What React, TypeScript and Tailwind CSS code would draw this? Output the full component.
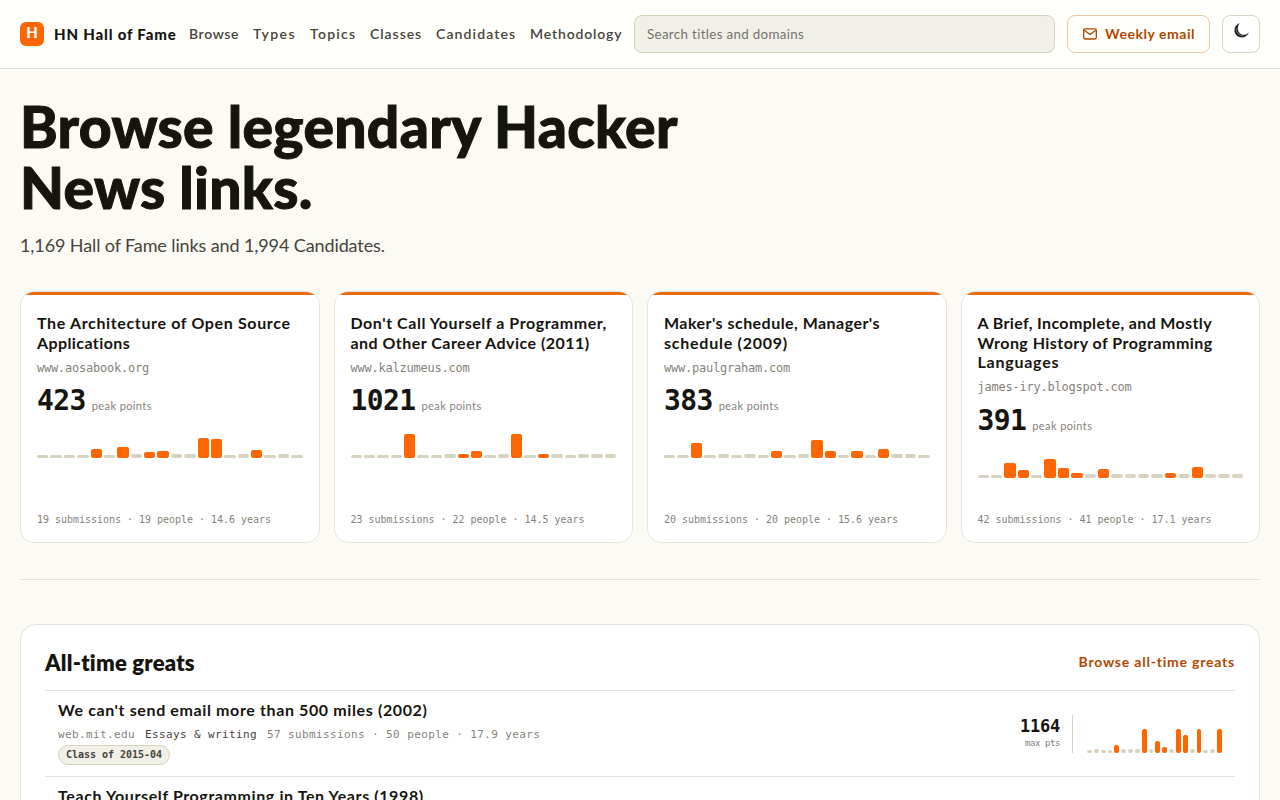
import { clsx } from "clsx";

type Bar = [height: number, hot?: boolean];

const bars = (heights: number[], hot: number[]): Bar[] =>
  heights.map((h, i) => [h, hot.includes(i)]);

type Line = { text: string; track: string };

const navItems = [
  { label: "Browse", cls: "w-[50px] tracking-[0.62px]" },
  { label: "Types", cls: "w-[43px] tracking-[1.4px]" },
  { label: "Topics", cls: "w-[46px] tracking-[1.25px]" },
  { label: "Classes", cls: "w-[52px] tracking-[0.95px]" },
  { label: "Candidates", cls: "w-[80px] tracking-[1.12px]" },
  { label: "Methodology", cls: "w-[92px] tracking-[0.85px]" },
];

const cards: {
  title: Line[];
  domain: string;
  points: string;
  meta: string;
  chart: Bar[];
}[] = [
  {
    title: [
      { text: "The Architecture of Open Source", track: "tracking-[0.64px]" },
      { text: "Applications", track: "tracking-[0.4px]" },
    ],
    domain: "www.aosabook.org",
    points: "423",
    meta: "19 submissions · 19 people · 14.6 years",
    chart: bars(
      [3, 3, 3, 3, 9, 3, 11, 4, 6, 7, 4, 4, 20, 19, 3, 4, 8, 3, 4, 3],
      [4, 6, 8, 9, 12, 13, 16],
    ),
  },
  {
    title: [
      { text: "Don't Call Yourself a Programmer,", track: "tracking-[0.55px]" },
      { text: "and Other Career Advice (2011)", track: "tracking-[0.47px]" },
    ],
    domain: "www.kalzumeus.com",
    points: "1021",
    meta: "23 submissions · 22 people · 14.5 years",
    chart: bars(
      [3, 3, 3, 3, 24, 3, 3, 4, 4, 7, 3, 4, 24, 3, 4, 4, 3, 4, 4, 4],
      [4, 8, 9, 12, 14],
    ),
  },
  {
    title: [
      { text: "Maker's schedule, Manager's", track: "tracking-[0.46px]" },
      { text: "schedule (2009)", track: "tracking-[0.75px]" },
    ],
    domain: "www.paulgraham.com",
    points: "383",
    meta: "20 submissions · 20 people · 15.6 years",
    chart: bars(
      [3, 3, 15, 3, 4, 3, 4, 3, 7, 3, 4, 18, 7, 3, 7, 3, 9, 4, 4, 3],
      [2, 8, 11, 12, 14, 16],
    ),
  },
  {
    title: [
      { text: "A Brief, Incomplete, and Mostly", track: "tracking-[0.36px]" },
      { text: "Wrong History of Programming", track: "tracking-[0.46px]" },
      { text: "Languages", track: "tracking-[0.76px]" },
    ],
    domain: "james-iry.blogspot.com",
    points: "391",
    meta: "42 submissions · 41 people · 17.1 years",
    chart: bars(
      [3, 3, 15, 8, 3, 19, 10, 5, 4, 9, 4, 4, 4, 4, 5, 4, 11, 4, 4, 4],
      [2, 3, 5, 6, 7, 9, 14, 16],
    ),
  },
];

type Row = {
  title: string;
  track: string;
  detail?: {
    domain: string;
    topic: string;
    meta: string;
    badge: string;
    points: string;
    chart: Bar[];
  };
};

const rows: Row[] = [
  {
    title: "We can't send email more than 500 miles (2002)",
    track: "tracking-[0.62px]",
    detail: {
      domain: "web.mit.edu",
      topic: "Essays & writing",
      meta: "57 submissions · 50 people · 17.9 years",
      badge: "Class of 2015-04",
      points: "1164",
      chart: bars(
        [3, 4, 3, 3, 8, 4, 4, 4, 24, 4, 12, 6, 4, 24, 18, 4, 24, 3, 4, 24],
        [4, 8, 10, 11, 13, 14, 16, 19],
      ),
    },
  },
  {
    title: "Teach Yourself Programming in Ten Years (1998)",
    track: "tracking-[0.6px]",
  },
];

function Chart({ data }: { data: Bar[] }) {
  return (
    <div className="flex h-6 items-end gap-[2px]">
      {data.map(([h, hot], i) => (
        <span
          key={i}
          className={clsx("min-w-0 flex-1 rounded-[2px]", hot ? "bg-[#ff6600]" : "bg-[#d8d3c1]")}
          style={{ height: h }}
        />
      ))}
    </div>
  );
}

function Moon() {
  return (
    <svg width="15" height="15" viewBox="0 0 15 15" className="mb-[7px]" aria-hidden="true">
      <path
        d="M5.2.5C2.2 1.7.5 4.5.7 7.8c.3 3.9 3.3 6.4 7.1 6.4 3 0 5.5-1.7 6.6-4.2-1.3 1.5-2.9 2.2-4.7 2.1C6.2 11.9 3.6 9 3.6 5.4c0-1.9.5-3.5 1.6-4.9Z"
        fill="#16140f"
        stroke="#16140f"
        strokeWidth="0.4"
      />
      <path d="M2.2 5.2c-.3 4.4 2.9 7.8 7.2 7.9" fill="none" stroke="#fff" strokeWidth="0.6" opacity="0.7" />
    </svg>
  );
}

function Mail() {
  return (
    <svg width="14" height="12" viewBox="0 0 14 12" fill="none" stroke="#b34700" strokeWidth="1.3" strokeLinecap="round" strokeLinejoin="round" aria-hidden="true">
      <rect x="0.7" y="0.8" width="12.6" height="10.2" rx="1.4" />
      <path d="m1.6 2.4 5.4 4.2 5.4-4.2" />
    </svg>
  );
}

export default function App() {
  return (
    <div className="h-[800px] overflow-hidden bg-[#fbfaf5] font-[Lato,'Liberation_Sans',sans-serif] text-[#16140f]">
      <header className="flex h-[69px] items-center gap-3 border-b border-[#e3e1da] bg-[#fffffc] px-5 pb-px">
        <div className="flex shrink-0 items-center gap-[10px]">
          <span className="flex size-6 items-center justify-center rounded-md bg-[#ff6600] pb-[3px] text-[15px] leading-none font-black text-white">
            H
          </span>
          <span className="w-[123px] whitespace-nowrap text-[15px] leading-5 font-black tracking-[0.83px]">
            HN Hall of Fame
          </span>
        </div>
        <nav className="flex shrink-0 gap-[14px] text-[14px] leading-5 font-semibold text-[#47443b]">
          {navItems.map((n) => (
            <a key={n.label} className={clsx("whitespace-nowrap", n.cls)}>
              {n.label}
            </a>
          ))}
        </nav>
        <input
          className="h-[38px] min-w-0 flex-1 rounded-lg border border-[#d5d3bd] bg-[#f0f0e8] px-3 text-[13.33px] tracking-[0.34px] placeholder:text-[#75736c]"
          placeholder="Search titles and domains"
        />
        <button className="flex h-[38px] w-[143px] shrink-0 items-center gap-2 rounded-lg border border-[#e9c8a3] bg-[#fffffc] pl-[15px] text-[14px] font-bold tracking-[0.55px] whitespace-nowrap text-[#b34700]">
          <Mail />
          Weekly email
        </button>
        <button className="flex size-[38px] shrink-0 items-center justify-center rounded-lg border border-[#d8d6c6] bg-white">
          <Moon />
        </button>
      </header>

      <main className="px-5 pt-[27px]">
        <h1 className="w-[720px] text-[57px] leading-[61px] font-black tracking-[0.3px] [-webkit-text-stroke:1px_#16140f]">
          Browse legendary Hacker
          <br />
          News links.
        </h1>
        <p className="mt-[14px] h-[27px] text-[18px] leading-[27px] tracking-[-0.11px] text-[#47443b]">
          1,169 Hall of Fame links and 1,994 Candidates.
        </p>

        <div className="mt-8 grid grid-cols-4 gap-[14px]">
          {cards.map((c) => (
            <article
              key={c.domain}
              className="flex h-[252px] flex-col overflow-hidden rounded-[14px] border border-[#e6e4dc] bg-white"
            >
              <div className="h-[3px] shrink-0 bg-[#ec690f]" />
              <div className="flex flex-1 flex-col px-4 pt-[18.4px] pb-[15px]">
                <h2 className="text-[16px] leading-[19.4px] font-bold">
                  {c.title.map((l) => (
                    <span key={l.text} className={clsx("block whitespace-nowrap", l.track)}>
                      {l.text}
                    </span>
                  ))}
                </h2>
                <p className="mt-[6.6px] font-['DejaVu_Sans_Mono',monospace] text-[12px] leading-[18px] tracking-[-0.22px] text-[#85827a]">
                  {c.domain}
                </p>
                <p className="mt-[10.6px] flex h-7 items-baseline gap-[6px]">
                  <span className="font-['DejaVu_Sans_Mono',monospace] text-[28px] leading-7 font-bold tracking-[-0.6px]">
                    {c.points}
                  </span>
                  <span className="text-[11px] leading-4 tracking-[0.4px] text-[#85827a]">peak points</span>
                </p>
                <div className="mt-[19px]">
                  <Chart data={c.chart} />
                </div>
                <p className="mt-auto font-['DejaVu_Sans_Mono',monospace] text-[10px] leading-[15px] tracking-[-0.02px] text-[#85827a]">
                  {c.meta}
                </p>
              </div>
            </article>
          ))}
        </div>

        <hr className="mt-9 border-t border-[#e6e4d8]" />

        <section className="mt-11 rounded-2xl border border-[#e3e1dc] bg-white px-6 pt-6">
          <div className="flex h-[41px] items-start justify-between">
            <h2 className="pt-px text-[22px] leading-[26px] font-extrabold tracking-[0.22px]">All-time greats</h2>
            <a className="text-[14px] leading-[26px] font-bold tracking-[0.79px] text-[#b34700]">
              Browse all-time greats
            </a>
          </div>
          {rows.map((r) => (
            <div key={r.title} className="flex h-[86px] items-start border-t border-[#e3e1dc] px-[13px] pt-[9px]">
              <div className="flex-1">
                <h3 className={clsx("text-[16px] leading-5 font-bold whitespace-nowrap", r.track)}>{r.title}</h3>
                {r.detail && (
                  <>
                    <p className="mt-[7px] flex gap-[10px] font-['DejaVu_Sans_Mono',monospace] text-[11px] leading-4 tracking-[0.38px] text-[#85827a]">
                      <span>{r.detail.domain}</span>
                      <span className="text-[#47443b]">{r.detail.topic}</span>
                      <span>{r.detail.meta}</span>
                    </p>
                    <span className="mt-[2px] flex h-5 w-28 items-center justify-center rounded-full border border-[#d5d3bd] bg-[#f0f0e8] font-['DejaVu_Sans_Mono',monospace] text-[10px] leading-none font-bold tracking-[-0.02px] whitespace-nowrap text-[#47443b]">
                      {r.detail.badge}
                    </span>
                  </>
                )}
              </div>
              {r.detail && (
                <div className="mt-[15px] flex h-[38px] items-end">
                  <div className="flex h-[38px] flex-col items-end pr-3 font-['DejaVu_Sans_Mono',monospace]">
                    <span className="mt-px text-[17px] leading-[21px] font-bold tracking-[-0.23px]">
                      {r.detail.points}
                    </span>
                    <span className="text-[9px] leading-3 tracking-[-0.42px] text-[#85827a]">max pts</span>
                  </div>
                  <div className="h-[38px] border-l border-[#d5d3bd] pl-[14px]">
                    <div className="w-[135px] pt-[14px]">
                      <Chart data={r.detail.chart} />
                    </div>
                  </div>
                </div>
              )}
            </div>
          ))}
        </section>
      </main>
    </div>
  );
}
